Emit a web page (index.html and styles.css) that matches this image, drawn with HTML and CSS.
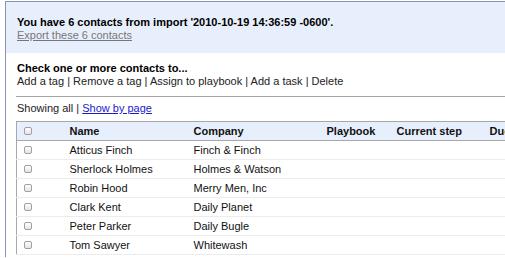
FILE: index.html
```html
<!DOCTYPE html>
<html lang="en">
<head>
  <meta charset="UTF-8">
  <meta name="viewport" content="width=device-width, initial-scale=1.0">
  <title>Contacts import</title>
  <link rel="stylesheet" href="styles.css">
</head>
<body>
  <div class="page">
    <div class="notice">
      <div class="noticeTitle">You have 6 contacts from import '2010-10-19 14:36:59 -0600'.</div>
      <a class="exportLink" href="#">Export these 6 contacts</a>
    </div>
    <div class="content">
      <div class="actions">
        <div class="actionsTitle">Check one or more contacts to...</div>
        <div class="actionList">Add a tag | Remove a tag | Assign to playbook | Add a task | Delete</div>
      </div>
      <div class="paging">Showing all | <a href="#">Show by page</a></div>
      <table class="contacts">
        <colgroup>
          <col class="colCheck">
          <col class="colName">
          <col class="colCompany">
          <col class="colPlaybook">
          <col class="colStep">
          <col class="colDue">
        </colgroup>
        <thead>
          <tr>
            <th><input type="checkbox" class="box"></th>
            <th>Name</th>
            <th>Company</th>
            <th>Playbook</th>
            <th>Current step</th>
            <th>Due</th>
          </tr>
        </thead>
        <tbody>
          <tr><td><input type="checkbox" class="box"></td><td>Atticus Finch</td><td>Finch &amp; Finch</td><td></td><td></td><td></td></tr>
          <tr><td><input type="checkbox" class="box"></td><td>Sherlock Holmes</td><td>Holmes &amp; Watson</td><td></td><td></td><td></td></tr>
          <tr><td><input type="checkbox" class="box"></td><td>Robin Hood</td><td>Merry Men, Inc</td><td></td><td></td><td></td></tr>
          <tr><td><input type="checkbox" class="box"></td><td>Clark Kent</td><td>Daily Planet</td><td></td><td></td><td></td></tr>
          <tr><td><input type="checkbox" class="box"></td><td>Peter Parker</td><td>Daily Bugle</td><td></td><td></td><td></td></tr>
          <tr><td><input type="checkbox" class="box"></td><td>Tom Sawyer</td><td>Whitewash</td><td></td><td></td><td></td></tr>
        </tbody>
      </table>
    </div>
  </div>
</body>
</html>
```

FILE: styles.css
```css
html{
  overflow: hidden;
}
body{
  margin: 0;
  padding-top: 1px;
  font-family: "Liberation Sans", Arial, sans-serif;
  font-size: 11px;
  line-height: 13px;
  color: #111;
}
.page{
  margin-left: 5px;
  border-left: 1px solid #8794b3;
  height: 256px;
}
.notice{
  border-top: 1px solid #8794b3;
  background-color: #e8effc;
  padding: 14px 10px 11px 11px;
}
.notice .noticeTitle{
  font-weight: bold;
  color: #000;
}
.notice .exportLink{
  display: inline-block;
  color: #777;
  text-decoration: underline;
}
.content{
  padding-left: 10px;
}
.actions{
  padding: 9px 0 8px 1px;
  border-bottom: 1px solid #a5a5a5;
}
.actions .actionsTitle{
  font-weight: bold;
  color: #000;
}
.actions .actionList{
  color: #222;
}
.paging{
  padding: 5px 0 6px 1px;
  color: #222;
}
.paging a{
  color: #1a1acc;
  text-decoration: underline;
}
.contacts{
  width: 560px;
  table-layout: fixed;
  border-collapse: collapse;
  border: 1px solid #a8a8a8;
}
.colCheck{ width: 45px; }
.colName{ width: 124px; }
.colCompany{ width: 133px; }
.colPlaybook{ width: 70px; }
.colStep{ width: 93px; }
.contacts th{
  background-color: #e8effc;
  font-weight: bold;
  text-align: left;
  height: 18px;
  padding: 0 0 0 8px;
  border-bottom: 1px solid #a8a8a8;
  color: #111;
}
.contacts td{
  height: 18px;
  padding: 0 0 0 8px;
  border-bottom: 1px solid #ececec;
  color: #111;
  white-space: nowrap;
}
.contacts th:first-child,
.contacts td:first-child{
  padding-left: 7px;
}
.box{
  -webkit-appearance: none;
  appearance: none;
  display: block;
  margin: 0;
  width: 8px;
  height: 8px;
  border: 1px solid #a0a0a0;
  border-radius: 2px;
  background: linear-gradient(#ffffff, #e4e4e4);
}
```
